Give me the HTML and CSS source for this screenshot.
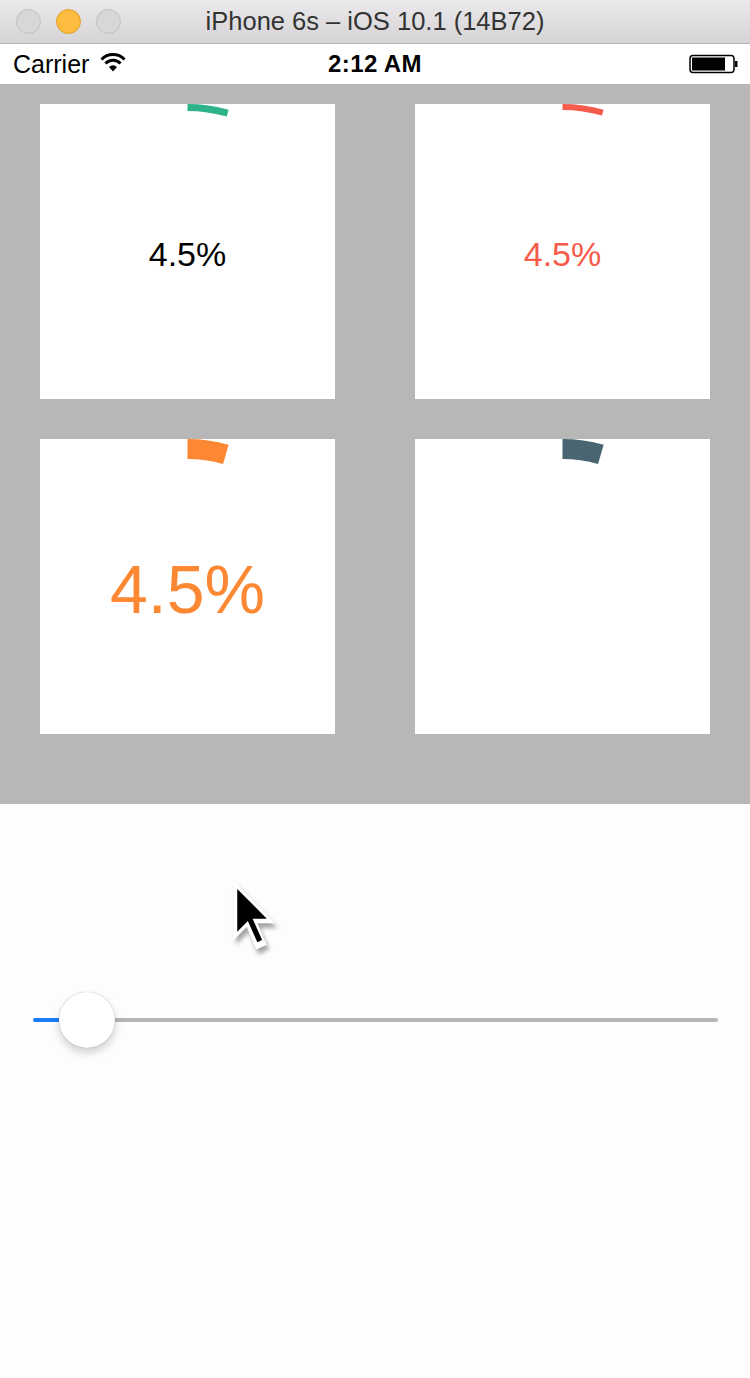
FILE: index.html
```html
<!DOCTYPE html>
<html>
<head>
<meta charset="utf-8">
<link rel="stylesheet" href="styles.css">
</head>
<body>
<div class="window">
  <div class="titlebar">
    <div class="lights">
      <span class="light gray"></span>
      <span class="light yellow"></span>
      <span class="light gray"></span>
    </div>
    <div class="title">iPhone 6s – iOS 10.1 (14B72)</div>
  </div>
  <div class="statusbar">
    <div class="carrier">Carrier
      <svg class="wifi" width="26" height="20" viewBox="0 0 26 20">
        <path d="M1.5 6.5 A16 16 0 0 1 24.5 6.5" fill="none" stroke="#000" stroke-width="3"/>
        <path d="M5.5 10.5 A10.5 10.5 0 0 1 20.5 10.5" fill="none" stroke="#000" stroke-width="3"/>
        <path d="M9 14 L13 18.5 L17 14 A5.5 5.5 0 0 0 9 14 Z" fill="#000"/>
      </svg>
    </div>
    <div class="time">2:12 AM</div>
    <div class="battery">
      <svg width="49" height="20" viewBox="0 0 49 20">
        <rect x="1" y="1.5" width="44" height="17" rx="3" fill="none" stroke="#000" stroke-width="1.5"/>
        <rect x="3" y="3.5" width="33" height="13" fill="#000"/>
        <rect x="46" y="7" width="2.5" height="6" fill="#000"/>
      </svg>
    </div>
  </div>
  <div class="panel">
    <div class="grid">
      <div class="card">
        <svg class="arc" width="295" height="295" viewBox="0 0 295 295">
          <path d="M147.5 3.5 A144 144 0 0 1 187.67 9.22" fill="none" stroke="#2db28a" stroke-width="7"/>
        </svg>
        <span class="value v-black">4.5%</span>
      </div>
      <div class="card">
        <svg class="arc" width="295" height="295" viewBox="0 0 295 295">
          <path d="M147.5 3 A144.5 144.5 0 0 1 187.81 8.74" fill="none" stroke="#f75b4b" stroke-width="6"/>
        </svg>
        <span class="value v-red">4.5%</span>
      </div>
      <div class="card">
        <svg class="arc" width="295" height="295" viewBox="0 0 295 295">
          <path d="M147.5 10 A137.5 137.5 0 0 1 185.86 15.46" fill="none" stroke="#fc8833" stroke-width="20"/>
        </svg>
        <span class="value v-orange">4.5%</span>
      </div>
      <div class="card">
        <svg class="arc" width="295" height="295" viewBox="0 0 295 295">
          <path d="M147.5 10 A137.5 137.5 0 0 1 185.86 15.46" fill="none" stroke="#4a6572" stroke-width="20"/>
        </svg>
      </div>
    </div>
  </div>
  <div class="content">
    <div class="slider">
      <div class="track-min"></div>
      <div class="thumb"></div>
      <div class="track-max"></div>
    </div>
  </div>
  <svg class="cursor" width="56" height="90" viewBox="0 0 46 76">
    <defs>
      <filter id="sh" x="-50%" y="-50%" width="200%" height="200%">
        <feGaussianBlur stdDeviation="2"/>
      </filter>
    </defs>
    <path d="M5 4 L5 54 L16 43 L24 62 L33 58 L25 40 L40 40 Z" fill="#000" opacity="0.35" filter="url(#sh)" transform="translate(2 4)"/>
    <path d="M5 4 L5 54 L16 43 L24 62 L33 58 L25 40 L40 40 Z" fill="#fff"/>
    <path d="M8 11 L8 47 L17 38 L25 56 L29 54 L21 36 L33 36 Z" fill="#000"/>
  </svg>
</div>
</body>
</html>
```

FILE: styles.css
```css
* { box-sizing: border-box; }
html, body {
  margin: 0;
  padding: 0;
  width: 750px;
  height: 1378px;
  overflow: hidden;
  background: #fdfdfd;
  font-family: "Liberation Sans", Arial, sans-serif;
}
.window {
  position: relative;
  width: 750px;
  height: 1378px;
  display: flex;
  flex-direction: column;
}
.titlebar {
  height: 44px;
  flex: none;
  background: linear-gradient(#ebe9eb, #d5d3d5);
  border-bottom: 1px solid #b1b1b1;
  position: relative;
  display: flex;
  align-items: center;
  justify-content: center;
}
.lights {
  position: absolute;
  left: 16px;
  top: 9px;
  display: flex;
  gap: 15px;
}
.light {
  width: 25px;
  height: 25px;
  border-radius: 50%;
}
.light.gray { background: #d8d6d8; border: 1px solid #c3c1c3; }
.light.yellow { background: #fdbc40; border: 1px solid #dfa024; }
.title {
  font-size: 25.5px;
  color: #333;
  margin-top: -1px;
}
.statusbar {
  height: 40px;
  flex: none;
  background: #fff;
  display: flex;
  align-items: center;
  justify-content: space-between;
  padding: 0 12px 0 13px;
  position: relative;
}
.carrier {
  font-size: 25px;
  color: #000;
  display: flex;
  align-items: center;
  gap: 11px;
}
.wifi { margin-top: -3px; }
.time {
  position: absolute;
  left: 0;
  right: 0;
  text-align: center;
  font-size: 24px;
  font-weight: bold;
  letter-spacing: 0.4px;
}
.battery { display: flex; align-items: center; }
.panel {
  height: 720px;
  flex: none;
  background: #b7b7b7;
  padding: 20px 40px 0 40px;
}
.grid {
  display: grid;
  grid-template-columns: 295px 295px;
  grid-template-rows: 295px 295px;
  column-gap: 80px;
  row-gap: 40px;
}
.card {
  position: relative;
  background: #fff;
  display: flex;
  align-items: center;
  justify-content: center;
}
.arc {
  position: absolute;
  left: 0;
  top: 0;
}
.value { line-height: 1; }
.v-black { font-size: 34px; color: #000; margin-top: 4px; }
.v-red { font-size: 34px; color: #f75b4b; margin-top: 4px; }
.v-orange { font-size: 68px; color: #fc8833; margin-top: 5px; }
.content {
  flex: 1;
  background: #fdfdfd;
  padding: 188px 32px 0 33px;
}
.slider {
  display: flex;
  align-items: center;
  height: 56px;
}
.track-min {
  width: 30px;
  height: 4px;
  background: #1a7df6;
  border-radius: 2px 0 0 2px;
  margin-right: -4px;
}
.thumb {
  width: 56px;
  height: 56px;
  border-radius: 50%;
  background: #fff;
  box-shadow: 0 0 1px rgba(0,0,0,0.35), 0 5px 8px rgba(0,0,0,0.18);
  position: relative;
  z-index: 1;
  flex: none;
}
.track-max {
  flex: 1;
  height: 4px;
  background: #b6b6b6;
  border-radius: 0 2px 2px 0;
  margin-left: -4px;
}
.cursor {
  position: absolute;
  left: 227px;
  top: 876px;
}
```
